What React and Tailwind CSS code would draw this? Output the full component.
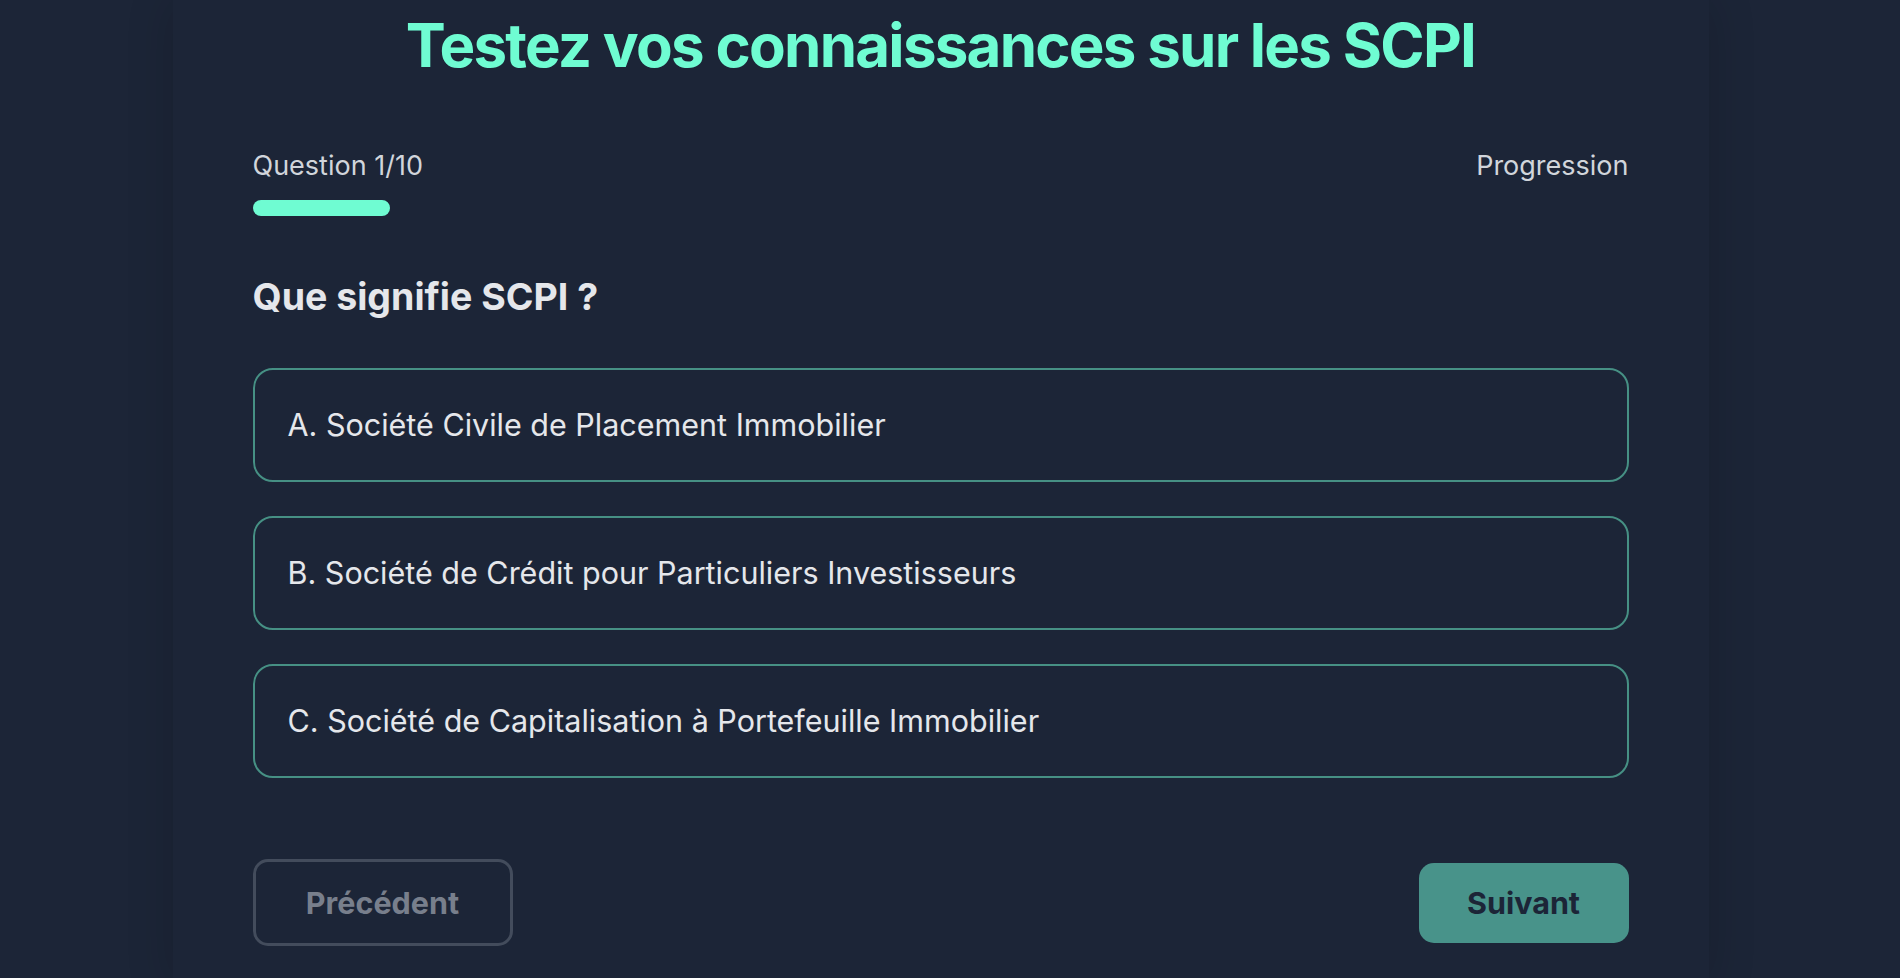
export default function App() {
  const options = [
    "A. Société Civile de Placement Immobilier",
    "B. Société de Crédit pour Particuliers Investisseurs",
    "C. Société de Capitalisation à Portefeuille Immobilier",
  ];
  return (
    <div
      className="min-h-screen w-full bg-[#1c2537] pr-[19px] overflow-hidden"
      style={{ fontFamily: "Inter, 'Noto Sans', sans-serif" }}
    >
      <div className="mx-auto w-[1536px] min-h-[978px] bg-[#1c2537] shadow-[0_0_45px_rgba(0,0,0,0.16)] px-[80px] pt-[15px] pb-10">
        <h1 className="text-center text-[60px] leading-[60px] font-bold tracking-[-0.029em] text-[#6ffcd2]">
          Testez vos connaissances sur les SCPI
        </h1>

        <div className="mt-[73px] flex items-center justify-between text-[27px] leading-[36px] text-[#d1d5db]">
          <span>Question 1/10</span>
          <span>Progression</span>
        </div>
        <div className="mt-[16px] h-[16px] w-full rounded-full">
          <div className="h-full w-[10%] rounded-full bg-[#6ffcd2]" />
        </div>

        <h2 className="mt-[58px] text-[37.5px] leading-[45px] font-bold text-[#e5e7eb]">
          Que signifie SCPI ?
        </h2>

        <div className="mt-[49px] flex flex-col gap-[34px]">
          {options.map((o) => (
            <button
              key={o}
              className="w-full h-[114px] rounded-[20px] border-2 border-[#6ffcd2]/50 px-[33px] text-left text-[30.5px] leading-[40px] text-[#e5e7eb]"
            >
              {o}
            </button>
          ))}
        </div>

        <div className="mt-[81px] flex items-center justify-between">
          <button className="h-[87px] w-[260px] rounded-[15px] border-[3px] border-[#434c5c] text-[30.5px] font-bold text-[#787f8c]">
            Précédent
          </button>
          <button className="h-[80px] w-[210px] rounded-[15px] bg-[#48938a] text-[30.5px] font-bold text-[#1c2537]">
            Suivant
          </button>
        </div>
      </div>
    </div>
  );
}
